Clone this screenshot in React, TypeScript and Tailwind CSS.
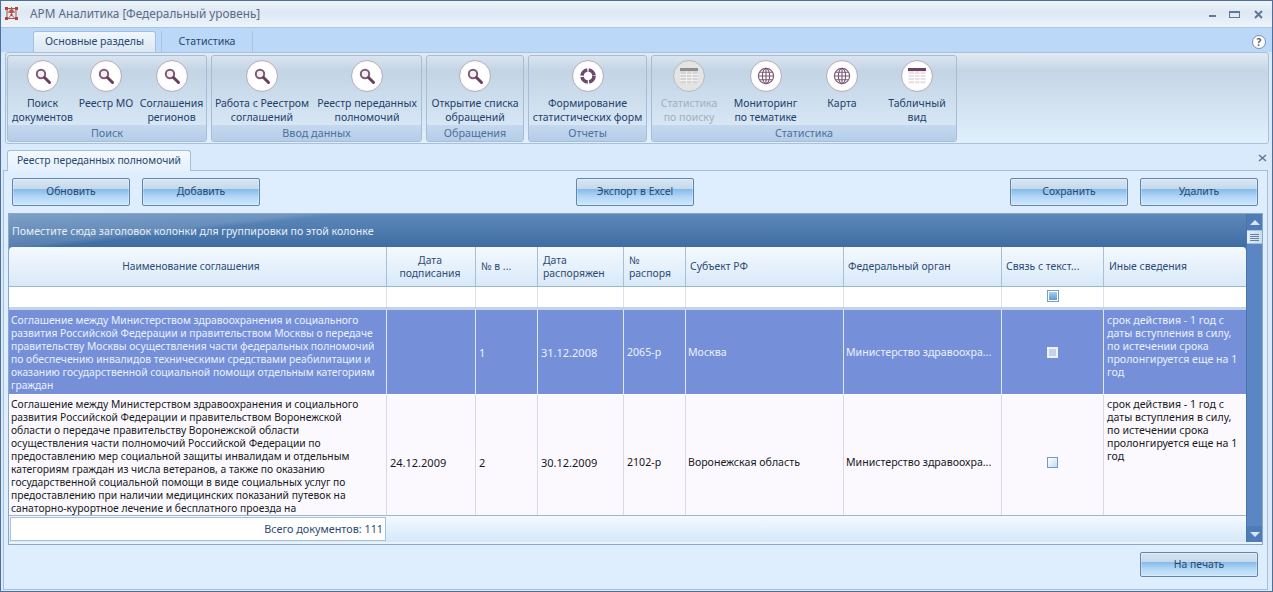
import React from "react";

const BTN =
  "w-[118px] h-[28px] rounded-[2px] border border-[#5f86ad] text-[#27486f] text-[10.4px] flex items-center justify-center shadow-[inset_0_0_0_1px_rgba(255,255,255,0.25)] bg-[linear-gradient(180deg,#d9e6f2_0%,#c4d9ec_38%,#86bbea_40%,#b5d8f6_70%,#cce6fb_100%)]";
const COLS = "grid grid-cols-[378px_89px_62px_86px_62px_158px_158px_102px_142px]";

function Search() {
  return (
    <svg width="18" height="18" viewBox="0 0 18 18" fill="none">
      <circle cx="7" cy="7" r="4.2" stroke="#7d5a73" strokeWidth="2" fill="#f4eef4" />
      <path d="M10.5 10.5 L15.5 15.5" stroke="#6a3f5e" strokeWidth="3" strokeLinecap="round" />
    </svg>
  );
}
function Ring() {
  return (
    <svg width="20" height="20" viewBox="0 0 20 20" fill="none">
      <circle cx="10" cy="10" r="6" stroke="#6d4a6b" strokeWidth="3.6" strokeDasharray="8 1.4" />
    </svg>
  );
}
function Globe() {
  return (
    <svg width="20" height="20" viewBox="0 0 20 20" fill="none" stroke="#7a5673" strokeWidth="1.1">
      <circle cx="10" cy="10" r="7.6" />
      <ellipse cx="10" cy="10" rx="3.6" ry="7.6" />
      <path d="M2.4 10H17.6M3.4 6.2H16.6M3.4 13.8H16.6M10 2.4V17.6" />
    </svg>
  );
}
function TableIcon({ off }: { off?: boolean }) {
  const head = off ? "#8e8e8e" : "#6b4063";
  const fill = off ? "#d5d5d5" : "#e9e2e6";
  const line = off ? "#f2f2f2" : "#ffffff";
  return (
    <svg width="18" height="16" viewBox="0 0 18 16">
      <rect x="0.5" y="0.5" width="17" height="15" fill={fill} />
      <rect x="0" y="0" width="18" height="3" fill={head} />
      <path d="M0 6.5H18M0 9.5H18M0 12.5H18M6.5 3V16M12 3V16" stroke={line} strokeWidth="1" />
    </svg>
  );
}

function Item({
  cls,
  icon,
  lines,
  off,
}: {
  cls: string;
  icon: React.ReactNode;
  lines: string[];
  off?: boolean;
}) {
  return (
    <div className={`${cls} flex flex-col items-center shrink-0`}>
      <div
        className={
          off
            ? "w-[32px] h-[32px] shrink-0 rounded-full border border-[#b9b9b9] bg-[#e4e4e4] flex items-center justify-center mt-[4px]"
            : "w-[32px] h-[32px] shrink-0 rounded-full border border-[#b9aeb8] bg-[radial-gradient(circle,#ffffff_55%,#f3eef3_100%)] flex items-center justify-center mt-[4px]"
        }
      >
        {icon}
      </div>
      <div
        className={`mt-[4px] shrink-0 text-[10.5px] leading-[14px] text-center whitespace-nowrap ${
          off ? "text-[#a3afbd]" : "text-[#23406b]"
        }`}
      >
        {lines.map((l) => (
          <div key={l}>{l}</div>
        ))}
      </div>
    </div>
  );
}

function Group({
  cls,
  label,
  children,
}: {
  cls: string;
  label: string;
  children: React.ReactNode;
}) {
  return (
    <div
      className={`${cls} h-[87px] shrink-0 rounded-[3px] border border-[#a5bdd6] flex flex-col bg-[linear-gradient(180deg,#d9e4f0_0%,#c3d4e5_18%,#d6e6f4_80%)]`}
    >
      <div className="flex-1 flex overflow-hidden">{children}</div>
      <div className="h-[16px] shrink-0 text-[10.8px] leading-[16px] text-center text-[#4e7199] bg-[linear-gradient(180deg,#c4d9ef_0%,#b5cde8_100%)]">
        {label}
      </div>
    </div>
  );
}

const row1 = [
  "Соглашение между Министерством здравоохранения и социального",
  "развития Российской Федерации и правительством Москвы о передаче",
  "правительству Москвы осуществления части федеральных полномочий",
  "по обеспечению инвалидов техническими средствами реабилитации и",
  "оказанию государственной социальной помощи отдельным категориям",
  "граждан",
];
const row2 = [
  "Соглашение между Министерством здравоохранения и социального",
  "развития Российской Федерации и правительством Воронежской",
  "области о передаче правительству Воронежской области",
  "осуществления части полномочий Российской Федерации по",
  "предоставлению мер социальной защиты инвалидам и отдельным",
  "категориям граждан из числа ветеранов, а также по оказанию",
  "государственной социальной помощи в виде социальных услуг по",
  "предоставлению при наличии медицинских показаний путевок на",
  "санаторно-курортное лечение и бесплатного проезда на",
];
const other = [
  "срок действия - 1 год с",
  "даты вступления в силу,",
  "по истечении срока",
  "пролонгируется еще на 1",
  "год",
];

function DataRow({
  lines,
  values,
  selected,
  tall,
}: {
  lines: string[];
  values: string[];
  selected?: boolean;
  tall?: boolean;
}) {
  const sep = selected ? "border-r border-[#dfe6f7]" : "border-r border-[#d6dce6]";
  const cell = `${sep} flex items-center whitespace-nowrap overflow-hidden`;
  return (
    <div
      className={`${COLS} ${tall ? "h-[134px]" : "h-full"} text-[10.6px] leading-[13px] ${
        selected ? "bg-[#7590d9] text-[#eaf0fc]" : "bg-[#fbf8fe] text-[#161a22]"
      }`}
    >
      <div className={`${sep} px-[2px] ${tall ? "pt-[3px]" : "pt-[4px]"} text-[10.3px] whitespace-nowrap overflow-hidden`}>
        {lines.map((l) => (
          <div key={l}>{l}</div>
        ))}
      </div>
      <div className={`${cell} px-[3px] text-[11px]`}>{values[0]}</div>
      <div className={`${cell} px-[3px] text-[11px]`}>{values[1]}</div>
      <div className={`${cell} px-[3px] text-[11px]`}>{values[2]}</div>
      <div className={`${cell} px-[3px]`}>{values[3]}</div>
      <div className={`${cell} px-[2px]`}>{values[4]}</div>
      <div className={`${cell} px-[2px]`}>{values[5]}</div>
      <div className={`${sep} flex items-center justify-center`}>
        <div
          className={
            selected
              ? "w-[11px] h-[11px] border-2 border-[#eef2fc] bg-[#c5d2ef]"
              : "w-[11px] h-[11px] border border-[#6f9bc9] bg-[linear-gradient(135deg,#ffffff,#c4dcf3)]"
          }
        />
      </div>
      <div className={`px-[3px] ${tall ? "pt-[3px]" : "pt-[4px]"} whitespace-nowrap overflow-hidden`}>
        {other.map((l) => (
          <div key={l}>{l}</div>
        ))}
      </div>
    </div>
  );
}

export default function App() {
  return (
    <div className="w-[1273px] h-[592px] overflow-hidden flex flex-col bg-[#d9eafc] border border-[#4d6f99] font-['Noto_Sans','Liberation_Sans',sans-serif]">
      {/* Title bar */}
      <div className="h-[27px] shrink-0 flex items-center bg-[linear-gradient(180deg,#eef4fa_0%,#dde8f3_45%,#eef5fb_100%)] border-b border-[#a9c6e6]">
        <svg className="ml-[3px] mt-[-2px]" width="15" height="15" viewBox="0 0 15 15" fill="none">
          <path d="M3 2.5H12V12.5H3ZM7.5 1V9M3.5 6H11.5M4 12.5L7.5 9L11 12.5" stroke="#9c5a4c" strokeWidth="1" />
          <rect x="1" y="1" width="3" height="3" fill="#b8403a" />
          <rect x="11" y="1" width="3" height="3" fill="#b8403a" />
          <rect x="1" y="11" width="3" height="3" fill="#b8403a" />
          <rect x="11" y="11" width="3" height="3" fill="#b8403a" />
          <rect x="5.5" y="3.5" width="4" height="3.5" fill="#c9473f" />
          <rect x="6.5" y="8" width="2" height="2" fill="#b8403a" />
        </svg>
        <div className="ml-[11px] mt-[-1px] text-[11.8px] text-[#5a6c85] whitespace-nowrap">
          АРМ Аналитика [Федеральный уровень]
        </div>
        <div className="ml-auto flex items-center">
          <div className="w-[7px] h-[2px] bg-[#5f7896] mt-[3px]" />
          <div className="w-[11px] h-[7px] border border-[#5f7896] border-t-2 ml-[13px]" />
          <svg className="ml-[14px] mr-[9px]" width="9" height="9" viewBox="0 0 9 9">
            <path d="M1 1L8 8M8 1L1 8" stroke="#5f7896" strokeWidth="2" />
          </svg>
        </div>
      </div>

      {/* Ribbon tabs */}
      <div className="h-[24px] shrink-0 flex items-end bg-[#bcd8f9] pl-[32px] text-[10.6px] text-[#27486f]">
        <div className="w-[123px] h-[21px] rounded-t-[3px] border border-b-0 border-[#a3c0df] bg-[linear-gradient(180deg,#f0f6fc,#dbe7f3)] flex items-center justify-center">
          Основные разделы
        </div>
        <div className="w-[92px] h-[21px] ml-[5px] border-x border-[#a8c4e4] flex items-center justify-center">
          Статистика
        </div>
        <div className="ml-auto mr-[6px] mb-[3px] w-[14px] h-[14px] rounded-full border border-[#7a8ea6] bg-white text-[10px] leading-[12px] font-bold text-center text-[#4e5f75]">
          ?
        </div>
      </div>

      {/* Ribbon */}
      <div className="h-[92px] shrink-0 mx-[4px] mr-[3px] rounded-[3px] border border-[#a9c0d9] flex items-start gap-[4px] pl-[1px] pt-[2px] bg-[linear-gradient(180deg,#e2eaf3_0%,#c5d5e5_20%,#e0f0fc_100%)]">
        <Group cls="w-[200px]" label="Поиск">
          <div className="pl-[4px] flex">
            <Item cls="w-[61px]" icon={<Search />} lines={["Поиск", "документов"]} />
            <Item cls="w-[54px] ml-[6px]" icon={<Search />} lines={["Реестр МО"]} />
            <Item cls="w-[61px] ml-[8px]" icon={<Search />} lines={["Соглашения", "регионов"]} />
          </div>
        </Group>
        <Group cls="w-[211px]" label="Ввод данных">
          <div className="pl-[3px] flex">
            <Item cls="w-[94px]" icon={<Search />} lines={["Работа с Реестром", "соглашений"]} />
            <Item cls="w-[102px] ml-[7px]" icon={<Search />} lines={["Реестр переданных", "полномочий"]} />
          </div>
        </Group>
        <Group cls="w-[98px]" label="Обращения">
          <Item cls="w-full" icon={<Search />} lines={["Открытие списка", "обращений"]} />
        </Group>
        <Group cls="w-[119px]" label="Отчеты">
          <Item cls="w-full" icon={<Ring />} lines={["Формирование", "статистических форм"]} />
        </Group>
        <Group cls="w-[306px]" label="Статистика">
          <div className="pl-[7px] flex">
            <Item cls="w-[60px]" off icon={<TableIcon off />} lines={["Статистика", "по поиску"]} />
            <Item cls="w-[63px] ml-[15px]" icon={<Globe />} lines={["Мониторинг", "по тематике"]} />
            <Item cls="w-[60px] ml-[15px]" icon={<Globe />} lines={["Карта"]} />
            <Item cls="w-[56px] ml-[17px]" icon={<TableIcon />} lines={["Табличный", "вид"]} />
          </div>
        </Group>
      </div>

      {/* Document tabs */}
      <div className="h-[26px] shrink-0 flex items-end pl-[6px] pr-[5px]">
        <div className="w-[184px] h-[21px] -mb-px relative rounded-t-[3px] border border-b-0 border-[#a6bed6] bg-[linear-gradient(180deg,#f4f9fe,#e4f0fc)] text-[10.3px] text-[#27486f] flex items-center justify-center">
          Реестр переданных полномочий
        </div>
        <svg className="ml-auto mb-[8px]" width="9" height="8" viewBox="0 0 9 8">
          <path d="M1 1L8 7M8 1L1 7" stroke="#5f7896" strokeWidth="1.5" />
        </svg>
      </div>

      {/* Content */}
      <div className="flex-1 min-h-0 mx-[2px] mr-[4px] mb-[1px] border border-[#a6bed6] bg-[#dfeeff] px-[4px] pt-[7px]">
        <div className="flex justify-between ml-[4px] mr-[5px]">
          <div className="flex gap-[12px]">
            <div className={BTN}>Обновить</div>
            <div className={BTN}>Добавить</div>
          </div>
          <div className={BTN}>Экспорт в Excel</div>
          <div className="flex gap-[12px]">
            <div className={BTN}>Сохранить</div>
            <div className={BTN}>Удалить</div>
          </div>
        </div>

        {/* Grid */}
        <div className="mt-[7px] h-[332px] border border-[#8aa8c6] pb-[2px] flex bg-[#e9f3fd]">
          <div className="w-[1237px] shrink-0 flex flex-col bg-[#5b86c4]">
            <div className="h-[33px] shrink-0 flex items-center pl-[3px] pt-[2px] text-[10.6px] text-[#e6eff9] bg-[linear-gradient(173.5deg,rgba(255,255,255,0.2)_0%,rgba(255,255,255,0.12)_33px,rgba(255,255,255,0)_38px),linear-gradient(180deg,#5d88ba_0%,#3f6da3_100%)]">
              Поместите сюда заголовок колонки для группировки по этой колонке
            </div>
            <div className={`${COLS} h-[40px] shrink-0 rounded-t-[4px] overflow-hidden border-b border-[#9db5cf] text-[10.4px] leading-[13px] text-[#2c4a73] bg-[linear-gradient(180deg,#f4f9fe_0%,#d9e9f9_100%)]`}>
              <div className="border-r border-[#a9bfd6] flex items-center justify-center pr-[13px] text-[10.2px]">Наименование соглашения</div>
              <div className="border-r border-[#a9bfd6] flex items-center justify-center pr-[2px] text-center">Дата<br />подписания</div>
              <div className="border-r border-[#a9bfd6] flex items-center pl-[5px]">№ в ...</div>
              <div className="border-r border-[#a9bfd6] flex items-center pl-[5px]">Дата<br />распоряжен</div>
              <div className="border-r border-[#a9bfd6] flex items-center pl-[5px]">№<br />распоря</div>
              <div className="border-r border-[#a9bfd6] flex items-center pl-[4px]">Субъект РФ</div>
              <div className="border-r border-[#a9bfd6] flex items-center pl-[4px]">Федеральный орган</div>
              <div className="border-r border-[#a9bfd6] flex items-center pl-[4px] whitespace-nowrap">Связь с текст...</div>
              <div className="flex items-center pl-[5px]">Иные сведения</div>
            </div>
            <div className={`${COLS} h-[20px] shrink-0 bg-white`}>
              <div className="border-r border-[#dde3ea]" />
              <div className="border-r border-[#dde3ea]" />
              <div className="border-r border-[#dde3ea]" />
              <div className="border-r border-[#dde3ea]" />
              <div className="border-r border-[#dde3ea]" />
              <div className="border-r border-[#dde3ea]" />
              <div className="border-r border-[#dde3ea]" />
              <div className="border-r border-[#dde3ea] flex items-center justify-center pb-[2px]">
                <div className="w-[12px] h-[12px] border border-[#6f9fca] p-[1px] bg-white">
                  <div className="w-full h-full bg-[linear-gradient(180deg,#a9cdea,#5f9bd0)]" />
                </div>
              </div>
              <div />
            </div>
            <div className="h-[3px] shrink-0 bg-[#c2d5e8]" />
            <div className="h-[85px] shrink-0 border-b border-[#ffffff]">
              <DataRow
                selected
                lines={row1}
                values={["", "1", "31.12.2008", "2065-р", "Москва", "Министерство здравоохра..."]}
              />
            </div>
            <div className="h-[120px] shrink-0 overflow-hidden">
              <DataRow
                tall
                lines={row2}
                values={["24.12.2009", "2", "30.12.2009", "2102-р", "Воронежская область", "Министерство здравоохра..."]}
              />
            </div>
            <div className="flex-1 min-h-0 border-t border-[#9db5cf] flex items-center bg-[linear-gradient(180deg,#f3f9ff,#d5e8fa)]">
              <div className="w-[376px] h-[24px] ml-[1px] border border-[#a8c0d8] bg-white text-[10.8px] text-[#2c4a73] flex items-center justify-end pr-[2px]">
                Всего документов: 111
              </div>
            </div>
          </div>
          <div className="flex-1 flex flex-col bg-[#5b86c4] border-l border-[#4a74ad]">
            <div className="h-[16px] shrink-0 flex items-center justify-center bg-[#4f7bb6]">
              <div className="w-0 h-0 border-x-[5px] border-x-transparent border-b-[5px] border-b-[#d7e6f5]" />
            </div>
            <div className="h-[14px] shrink-0 bg-[linear-gradient(90deg,#e3eefa,#c9dcef)] border-y border-[#a5c0dc] flex flex-col items-center justify-center gap-[1px]">
              <div className="w-[9px] h-px bg-[#6a7f98]" />
              <div className="w-[9px] h-px bg-[#6a7f98]" />
              <div className="w-[9px] h-px bg-[#6a7f98]" />
              <div className="w-[9px] h-px bg-[#6a7f98]" />
            </div>
            <div className="flex-1" />
            <div className="h-[16px] shrink-0 flex items-center justify-center bg-[#4f7bb6]">
              <div className="w-0 h-0 border-x-[5px] border-x-transparent border-t-[5px] border-t-[#d7e6f5]" />
            </div>
          </div>
        </div>

        <div className="mt-[7px] flex justify-end mr-[5px]">
          <div className={`${BTN} !h-[25px]`}>На печать</div>
        </div>
      </div>
    </div>
  );
}
